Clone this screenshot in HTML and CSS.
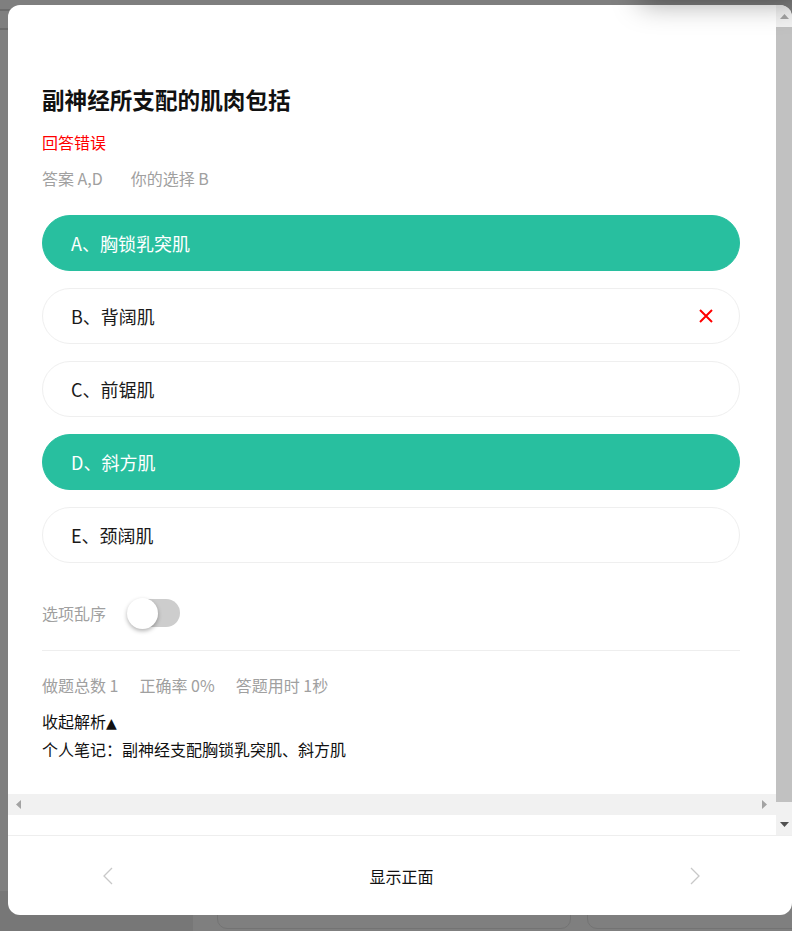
FILE: index.html
```html
<!DOCTYPE html>
<html lang="zh-CN">
<head>
    <meta charset="UTF-8">
    <meta name="viewport" content="width=device-width, initial-scale=1.0">
    <title>题目解析</title>
    <link rel="stylesheet" href="styles.css">
</head>
<body>

    <!-- page behind the mask -->
    <div class="backdrop">
        <div class="bd-line line-1"></div>
        <div class="bd-line line-2"></div>
        <div class="bd-side"></div>
        <div class="bd-card card-1"></div>
        <div class="bd-card card-2"></div>
    </div>

    <div class="top-shadow"></div>

    <div class="modal">
        <div class="modal-body">
            <div class="scroll-main">
                <div class="content">
                    <h1 class="question">副神经所支配的肌肉包括</h1>
                    <p class="result">回答错误</p>
                    <div class="answer-line">
                        <span>答案 A,D</span>
                        <span>你的选择 B</span>
                    </div>

                    <ul class="options">
                        <li class="option correct">A、胸锁乳突肌</li>
                        <li class="option">
                            <span>B、背阔肌</span>
                            <svg class="wrong-mark" width="14" height="14" viewBox="0 0 14 14">
                                <path d="M1 1 L13 13 M13 1 L1 13" stroke="#f00" stroke-width="2" fill="none"/>
                            </svg>
                        </li>
                        <li class="option">C、前锯肌</li>
                        <li class="option correct">D、斜方肌</li>
                        <li class="option">E、颈阔肌</li>
                    </ul>

                    <div class="shuffle-row">
                        <span>选项乱序</span>
                        <span class="switch"><span class="knob"></span></span>
                    </div>

                    <div class="divider"></div>

                    <div class="stats">
                        <span>做题总数 1</span>
                        <span>正确率 0%</span>
                        <span>答题用时 1秒</span>
                    </div>

                    <div class="toggle-analysis">收起解析<span class="arrow">▲</span></div>
                    <div class="note">个人笔记：副神经支配胸锁乳突肌、斜方肌</div>
                </div>

                <div class="hscroll">
                    <svg width="5" height="9" viewBox="0 0 5 9"><path d="M5 0 L0 4.5 L5 9 Z" fill="#a3a3a3"/></svg>
                    <svg width="5" height="9" viewBox="0 0 5 9"><path d="M0 0 L5 4.5 L0 9 Z" fill="#a3a3a3"/></svg>
                </div>
                <div class="bottom-strip"></div>
            </div>

            <div class="vscroll">
                <div class="vbtn">
                    <svg width="9" height="5" viewBox="0 0 9 5"><path d="M0 5 L4.5 0 L9 5 Z" fill="#a3a3a3"/></svg>
                </div>
                <div class="vthumb"></div>
                <div class="vtrack"></div>
                <div class="vbtn">
                    <svg width="9" height="5" viewBox="0 0 9 5"><path d="M0 0 L4.5 5 L9 0 Z" fill="#505050"/></svg>
                </div>
            </div>
        </div>

        <div class="modal-footer">
            <svg class="chevron" width="10" height="18" viewBox="0 0 10 18">
                <path d="M9 1 L1 9 L9 17" stroke="#c8c8c8" stroke-width="1.3" fill="none"/>
            </svg>
            <span class="flip">显示正面</span>
            <svg class="chevron" width="10" height="18" viewBox="0 0 10 18">
                <path d="M1 1 L9 9 L1 17" stroke="#c8c8c8" stroke-width="1.3" fill="none"/>
            </svg>
        </div>
    </div>

</body>
</html>
```

FILE: styles.css
```css
* {
    margin: 0;
    padding: 0;
    box-sizing: border-box;
}

body {
    background-color: #7f7f7f;
    font-family: "Noto Sans CJK SC", "Noto Sans", sans-serif;
    color: #1a1a1a;
    height: 931px;
    overflow: hidden;
    position: relative;
}

/* page behind the mask */
.backdrop {
    position: absolute;
    top: 0;
    left: 0;
    width: 100%;
    height: 100%;
}

.bd-line {
    position: absolute;
    left: 0;
    width: 10px;
    height: 2px;
    background-color: #6c6c6c;
}

.line-1 { top: 9px; }
.line-2 { top: 28px; }

.bd-side {
    position: absolute;
    left: 0;
    bottom: 0;
    width: 193px;
    height: 40px;
    background-color: #777;
}

.bd-card {
    position: absolute;
    top: 880px;
    height: 49px;
    border: 1px solid #737373;
    border-radius: 10px;
}

.card-1 { left: 217px; width: 354px; }
.card-2 { left: 587px; width: 230px; }

.top-shadow {
    position: absolute;
    top: -40px;
    left: 640px;
    width: 160px;
    height: 40px;
    background-color: #777;
    box-shadow: 0 4px 28px rgba(0, 0, 0, 0.35);
    z-index: 2;
}

/* modal */
.modal {
    position: relative;
    z-index: 1;
    margin: 5px 0 0 8px;
    width: 784px;
    height: 910px;
    background-color: #fff;
    border-radius: 12px;
    overflow: hidden;
    display: flex;
    flex-direction: column;
}

.modal-body {
    height: 830px;
    display: flex;
}

.scroll-main {
    flex: 1;
    display: flex;
    flex-direction: column;
}

.content {
    flex: 1;
    overflow: hidden;
    padding: 80px 36px 0 34px;
}

.question {
    font-size: 22.6px;
    line-height: 30px;
    font-weight: bold;
    color: #111;
}

.result {
    margin-top: 16px;
    font-size: 16px;
    line-height: 22px;
    color: #f00;
}

.answer-line {
    margin-top: 14px;
    display: flex;
    gap: 28px;
    font-size: 16px;
    line-height: 22px;
    color: #a0a0a0;
}

.options {
    list-style: none;
    margin-top: 26px;
    display: flex;
    flex-direction: column;
    gap: 17px;
}

.option {
    height: 56px;
    border: 1px solid #efefef;
    border-radius: 28px;
    padding: 0 26px 0 28px;
    display: flex;
    align-items: center;
    justify-content: space-between;
    font-size: 18px;
    color: #1a1a1a;
}

.option.correct {
    background-color: #28bf9f;
    border-color: #28bf9f;
    color: #fff;
}

.shuffle-row {
    margin-top: 34px;
    height: 32px;
    display: flex;
    align-items: center;
    gap: 22px;
    font-size: 16px;
    color: #a0a0a0;
}

.switch {
    position: relative;
    width: 52px;
    height: 28px;
    border-radius: 14px;
    background-color: #cdcdcd;
}

.knob {
    position: absolute;
    top: -1px;
    left: -1px;
    width: 31px;
    height: 31px;
    border-radius: 50%;
    background-color: #fff;
    box-shadow: 0 2px 4px rgba(0, 0, 0, 0.3);
}

.divider {
    margin-top: 21px;
    height: 1px;
    background-color: #eee;
}

.stats {
    margin-top: 23px;
    display: flex;
    gap: 21px;
    font-size: 16px;
    line-height: 22px;
    color: #a0a0a0;
}

.toggle-analysis {
    margin-top: 11px;
    font-size: 16px;
    line-height: 28px;
    color: #111;
}

.arrow {
    font-family: "DejaVu Sans", sans-serif;
    font-size: 14px;
}

.note {
    font-size: 16px;
    line-height: 24px;
    color: #111;
}

/* scrollbars */
.hscroll {
    height: 21px;
    background-color: #f1f1f1;
    display: flex;
    align-items: center;
    justify-content: space-between;
    padding: 0 9px 0 8px;
}

.bottom-strip {
    height: 20px;
}

.vscroll {
    width: 16px;
    background-color: #f1f1f1;
    display: flex;
    flex-direction: column;
}

.vbtn {
    height: 22px;
    display: flex;
    align-items: center;
    justify-content: center;
}

.vthumb {
    height: 775px;
    background-color: #c1c1c1;
}

.vtrack {
    flex: 1;
}

/* footer */
.modal-footer {
    height: 80px;
    border-top: 1px solid #eee;
    display: flex;
    align-items: center;
    justify-content: space-between;
    padding: 0 92px 0 95px;
}

.flip {
    font-size: 16px;
    color: #111;
}
```
